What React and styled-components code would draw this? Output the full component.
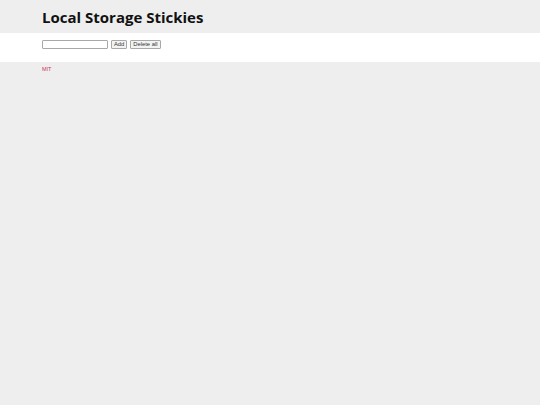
import React, { useState } from 'react';
import styled, { createGlobalStyle } from 'styled-components';

const Global = createGlobalStyle`
	html, body {
		margin: 0;
		padding: 0;
		background: #eeeeee;
		font-family: 'Liberation Sans', Arial, sans-serif;
	}
`;

const Header = styled.header`
	height: 33px;
	padding: 0 42px;
	display: flex;
	align-items: center;
	background: #eeeeee;
`;

const Title = styled.h1`
	margin: 0;
	font-family: 'Open Sans', sans-serif;
	font-weight: 700;
	font-size: 15px;
	color: #111;
`;

const Toolbar = styled.div`
	height: 29px;
	padding: 7px 42px 0;
	box-sizing: border-box;
	display: flex;
	align-items: flex-start;
	gap: 3px;
	background: #ffffff;
`;

const Field = styled.input`
	box-sizing: border-box;
	width: 66px;
	height: 9px;
	margin: 0;
	padding: 0 2px;
	border: 1px solid #a8a8a8;
	border-radius: 1px;
	font-size: 6px;
	outline: none;
`;

const Button = styled.button`
	box-sizing: border-box;
	height: 9px;
	padding: 0 2px;
	margin: 0;
	border: 1px solid #a8a8a8;
	border-radius: 1px;
	background: #f3f3f3;
	font-family: 'Liberation Sans', Arial, sans-serif;
	font-size: 5.8px;
	line-height: 7px;
	color: #333;
`;

const Footer = styled.footer`
	padding: 0 42px;
	line-height: 7px;
`;

const License = styled.a`
	font-size: 5.5px;
	color: #cc3360;
	text-decoration: none;
`;

const App = () => {
	const [text, setText] = useState('');

	return (
		<>
			<Global />
			<Header>
				<Title>Local Storage Stickies</Title>
			</Header>
			<Toolbar>
				<Field value={text} onChange={(e) => setText(e.target.value)} />
				<Button>Add</Button>
				<Button>Delete all</Button>
			</Toolbar>
			<Footer>
				<License href="#">MIT</License>
			</Footer>
		</>
	);
};

export default App;
